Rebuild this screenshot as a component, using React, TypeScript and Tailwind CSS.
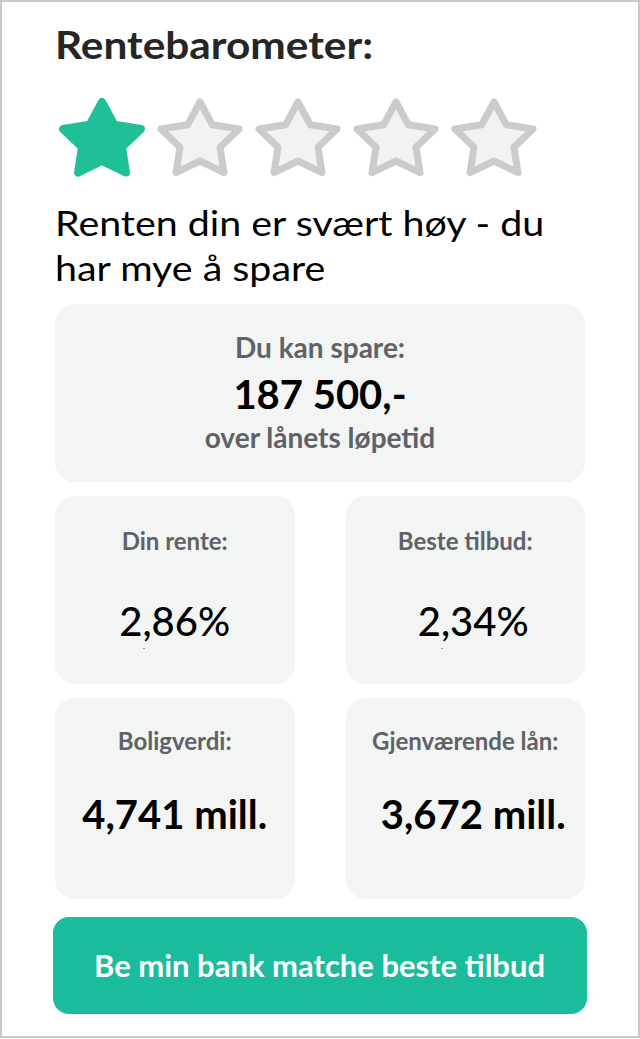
import React from "react";

const STAR =
  "M46 6 L58.4 28.8 L85 33 L66 51.2 L70 76.6 L46 65 L22 76.6 L26 51.2 L7 33 L33.6 28.8 Z";

const Star = ({ filled }: { filled: boolean }) => (
  <svg width="92" height="84" viewBox="0 0 92 84" className="shrink-0">
    <path
      d={STAR}
      fill={filled ? "#1fbf97" : "#f2f2f2"}
      stroke={filled ? "#1fbf97" : "#cbcbcb"}
      strokeWidth={filled ? 8 : 7}
      strokeLinejoin="round"
    />
  </svg>
);

const Card = ({
  label,
  value,
  bold,
  labelMt,
  valueMt,
  dot,
  shift,
}: {
  label: string;
  value: string;
  bold?: boolean;
  labelMt: string;
  valueMt: string;
  dot?: boolean;
  shift?: boolean;
}) => (
  <div className="flex-1 rounded-[20px] bg-[#f3f4f4] flex flex-col items-center">
    <div className={`${labelMt} text-[24px] font-bold text-[#5f6266] leading-none`}>{label}</div>
    <div
      className={`${valueMt} ${shift ? "ml-[16px]" : ""} text-[40px] text-black leading-none ${
        bold ? "font-bold" : "font-medium"
      }`}
    >
      {value}
    </div>
    {dot && <div className={`mt-[7px] ${shift ? "mr-[46px]" : "mr-[62px]"} w-[2px] h-[1px] bg-[#9a9a9a]`} />}
  </div>
);

export default function App() {
  return (
    <div
      className="w-[640px] h-[1038px] border-2 border-[#c8c8c8] bg-white box-border"
      style={{ fontFamily: "Lato, 'Noto Sans', sans-serif" }}
    >
      <div className="pl-[53px] pr-[53px] pt-[23px]">
        <h1 className="inline-block origin-left scale-x-[1.115] text-[38px] font-bold text-[#262626] leading-none whitespace-nowrap">
          Rentebarometer:
        </h1>
        <div className="flex gap-[6px] mt-[31px] ml-[1px]">
          <Star filled />
          <Star filled={false} />
          <Star filled={false} />
          <Star filled={false} />
          <Star filled={false} />
        </div>
        <p className="mt-[20px] origin-left scale-x-[1.125] text-[35px] leading-[45px] text-black whitespace-nowrap">
          Renten din er svært høy - du
          <br />
          har mye å spare
        </p>
        <div className="mt-[14px] h-[178px] rounded-[20px] bg-[#f3f4f4] flex flex-col items-center">
          <div className="mt-[29px] text-[28px] font-bold text-[#5f6266] leading-none">Du kan spare:</div>
          <div className="mt-[13px] text-[40px] font-bold text-black leading-none">187 500,-</div>
          <div className="mt-[9px] text-[28px] font-bold text-[#5f6266] leading-none">over lånets løpetid</div>
        </div>
        <div className="mt-[14px] flex gap-[51px] h-[188px]">
          <Card label="Din rente:" value="2,86%" labelMt="mt-[33px]" valueMt="mt-[48px]" dot />
          <Card label="Beste tilbud:" value="2,34%" labelMt="mt-[33px]" valueMt="mt-[48px]" dot shift />
        </div>
        <div className="mt-[14px] flex gap-[51px] h-[201px]">
          <Card label="Boligverdi:" value="4,741 mill." bold labelMt="mt-[31px]" valueMt="mt-[41px]" />
          <Card label="Gjenværende lån:" value="3,672 mill." bold labelMt="mt-[31px]" valueMt="mt-[41px]" shift />
        </div>
        <button className="mt-[18px] ml-[-2.5px] w-[534px] h-[97px] rounded-[16px] bg-[#1abc9c] text-white text-[31px] font-bold flex items-center justify-center">
          Be min bank matche beste tilbud
        </button>
      </div>
    </div>
  );
}
